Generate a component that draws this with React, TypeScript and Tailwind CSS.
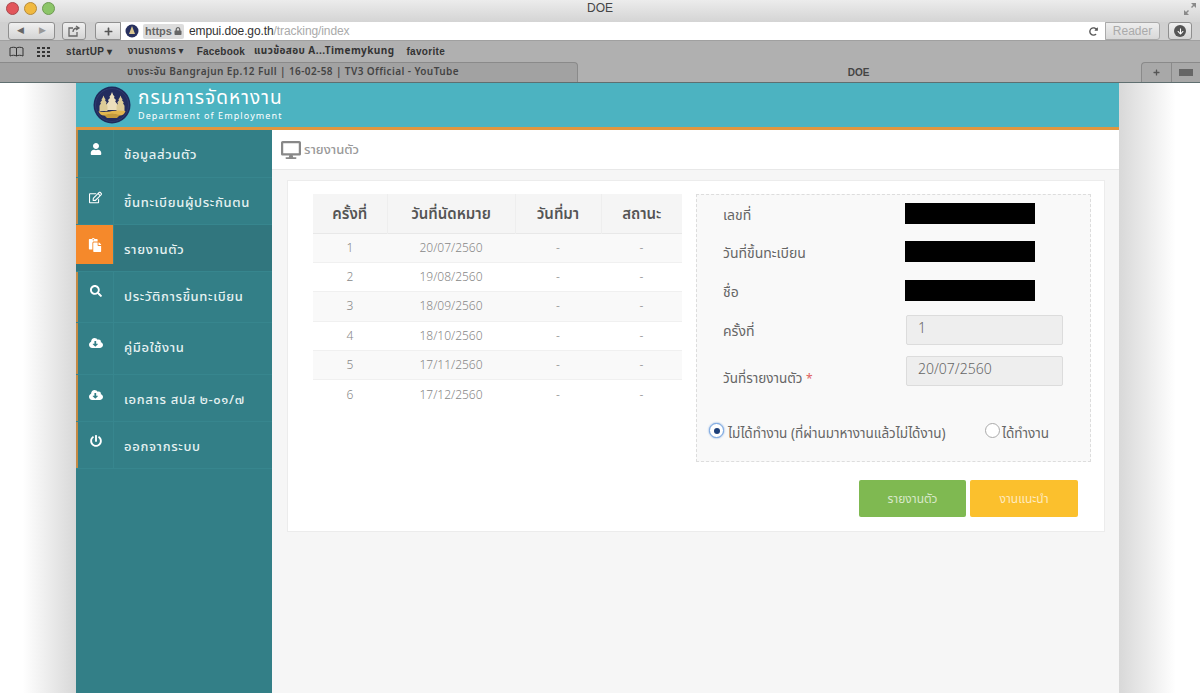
import React from 'react';
import { FaUser, FaRegEdit, FaPaste, FaSearch, FaCloudDownloadAlt, FaPowerOff, FaDesktop, FaLock, FaPlus, FaRedoAlt, FaArrowDown } from 'react-icons/fa';

const thai = { fontFamily: '"Noto Sans Thai", "Noto Sans", "Open Sans", "DejaVu Sans", sans-serif' };

const menu = [
    { label: 'ข้อมูลส่วนตัว', icon: FaUser, h: 'h-[48px]', size: 12 },
    { label: 'ขึ้นทะเบียนผู้ประกันตน', icon: FaRegEdit, h: 'h-[47px]', size: 13 },
    { label: 'รายงานตัว', icon: FaPaste, h: 'h-[47px]', size: 14, active: true },
    { label: 'ประวัติการขึ้นทะเบียน', icon: FaSearch, h: 'h-[51px]', size: 12 },
    { label: 'คู่มือใช้งาน', icon: FaCloudDownloadAlt, h: 'h-[52px]', size: 14 },
    { label: 'เอกสาร สปส ๒-๐๑/๗', icon: FaCloudDownloadAlt, h: 'h-[47px]', size: 14 },
    { label: 'ออกจากระบบ', icon: FaPowerOff, h: 'h-[47px]', size: 12 },
];

const rows = [
    ['1', '20/07/2560'],
    ['2', '19/08/2560'],
    ['3', '18/09/2560'],
    ['4', '18/10/2560'],
    ['5', '17/11/2560'],
    ['6', '17/12/2560'],
];

const Logo = () => (
    <svg width="38" height="38" viewBox="0 0 38 38">
        <circle cx="19" cy="19" r="18.5" fill="#1d2a5c" />
        <circle cx="19" cy="19" r="16.5" fill="#232c5e" stroke="#3d4a80" strokeWidth="0.5" />
        {/* three chedis */}
        <path d="M19 6l1.200 3 1.300 1.500-.5 1.500 2 2-.8 1.500 2 2.500V24H13.800v-6l2-2.500-.8-1.500 2-2-.5-1.500L17.800 9z" fill="#ecdfbd" />
        <path d="M10.500 9.500l1 2.500 1 1.200-.4 1.300 1.600 1.800-.6 1.200 1.400 2.200V25H6.500v-5.300l1.400-2.200-.6-1.200 1.600-1.800-.4-1.300 1-1.200z" fill="#dccb98" />
        <path d="M27.500 9.500l1 2.500 1 1.200-.4 1.300 1.600 1.800-.6 1.200 1.400 2.200V25h-8v-5.300l1.400-2.200-.6-1.200 1.600-1.800-.4-1.300 1-1.200z" fill="#dccb98" />
        <path d="M5.500 25c4 1.500 8 1 13.500 0s9.500-.5 13.500 0c-1 3-3 4.500-5.500 4.500-3 0-5-1.500-8-1.500s-5 1.500-8 1.500c-2.500 0-4.500-1.500-5.500-4.500z" fill="#e2b64f" />
        <path d="M11 29l8-1.500 8 1.500-3 3h-10z" fill="#c49a3c" />
    </svg>
);

const BrowserChrome = () => (
    <div className="shrink-0" style={{ fontFamily: '"Liberation Sans", Arial, sans-serif' }}>
        <div className="h-[22px] bg-gradient-to-b from-[#ececec] to-[#d4d4d4] flex items-start pt-[2px] relative">
            <div className="flex gap-[5px] pl-[6px]">
                <span className="w-[13px] h-[13px] rounded-full bg-[#e2555a] border border-[#a8484c]" />
                <span className="w-[13px] h-[13px] rounded-full bg-[#f0b93f] border border-[#b68a3a]" />
                <span className="w-[13px] h-[13px] rounded-full bg-[#8cc568] border border-[#6e9a52]" />
            </div>
            <span className="absolute left-0 right-0 top-0 text-center text-[12px] leading-[17px] text-[#444]">DOE</span>
            <svg className="ml-auto mr-[3px]" width="14" height="14" viewBox="0 0 14 14" fill="#8a8a8a">
                <path d="M8 1h5v5l-2-2-2 2-1-1 2-2zM1 8l2 2 2-2 1 1-2 2 2 2H1z" />
            </svg>
        </div>
        <div className="h-[18px] bg-[#d0d0d0] flex items-center">
            <div className="ml-[8px] w-[47px] h-[18px] border border-[#8f8f8f] rounded-[3px] bg-gradient-to-b from-[#f0f0f0] to-[#d4d4d4] flex items-center justify-around text-[9px] text-[#666]">
                <span>◀</span>
                <span className="text-[#999]">▶</span>
            </div>
            <div className="ml-[7px] w-[24px] h-[18px] border border-[#8f8f8f] rounded-[3px] bg-gradient-to-b from-[#f0f0f0] to-[#d4d4d4] flex items-center justify-center">
                <svg width="13" height="12" viewBox="0 0 13 12" fill="none" stroke="#666" strokeWidth="1.3">
                    <path d="M9 7v4H1V3h4M5 7c0-3 2-4 5-4M8 1l3 2-3 2" />
                </svg>
            </div>
            <div className="ml-[9px] w-[26px] h-[18px] border border-[#8f8f8f] rounded-l-[3px] bg-gradient-to-b from-[#f0f0f0] to-[#d4d4d4] flex items-center justify-center text-[#555]">
                <FaPlus size={9} />
            </div>
            <div className="w-[984px] h-[18px] bg-white flex items-center pl-[4px]">
                <svg width="14" height="14" viewBox="0 0 14 14">
                    <circle cx="7" cy="7" r="6.5" fill="#27305f" />
                    <path d="M7 2l3 8H4z" fill="#d9c690" />
                </svg>
                <span className="ml-[4px] h-[15px] w-[41px] bg-[#dddddd] rounded-[2px] flex items-center justify-center gap-[2px] text-[11px] text-[#666] font-bold">
                    https<FaLock size={8} />
                </span>
                <span className="ml-[5px] text-[12px] tracking-[-0.1px] text-[#333]">empui.doe.go.th<span className="text-[#aaa]">/tracking/index</span></span>
                <FaRedoAlt className="ml-auto mr-[7px] text-[#555]" size={9} />
            </div>
            <div className="w-[55px] h-[18px] border border-[#aaa] rounded-r-[3px] bg-gradient-to-b from-[#eee] to-[#d8d8d8] flex items-center justify-center text-[12px] text-[#aaa]">Reader</div>
            <div className="ml-[8px] w-[24px] h-[18px] border border-[#8f8f8f] rounded-[3px] bg-gradient-to-b from-[#f0f0f0] to-[#d4d4d4] flex items-center justify-center">
                <span className="w-[12px] h-[12px] rounded-full bg-[#555] flex items-center justify-center text-white"><FaArrowDown size={7} /></span>
            </div>
        </div>
        <div className="h-[22px] bg-[#b0b0b0] flex items-center text-[10px] font-bold text-[#333] tracking-[0.15px] border-t border-[#a0a0a0]">
            <svg className="ml-[9px]" width="15" height="11" viewBox="0 0 15 11" fill="none" stroke="#333">
                <path d="M7.500 2C6 1 3 1 1 2v8c2-1 5-1 6.500 0 1.500-1 4.500-1 6.500 0V2c-2-1-5-1-6.500 0zv8" />
            </svg>
            <svg className="ml-[13px]" width="13" height="10" viewBox="0 0 13 10" fill="#333">
                <path d="M0 0h3v2H0zM5 0h3v2H5zM10 0h3v2h-3zM0 4h3v2H0zM5 4h3v2H5zM10 4h3v2h-3zM0 8h3v2H0zM5 8h3v2H5zM10 8h3v2h-3z" />
            </svg>
            <span className="ml-[16px] tracking-[0.4px]">startUP ▾</span>
            <span className="ml-[15px] text-[10px] font-semibold" style={thai}>งานราชการ ▾</span>
            <span className="ml-[13px] tracking-[0.2px]">Facebook</span>
            <span className="ml-[9px] tracking-[0.4px]" style={thai}>แนวข้อสอบ A...Timemykung</span>
            <span className="ml-[12px] tracking-[0.3px]">favorite</span>
        </div>
        <div className="h-[21px] bg-[#b0b0b0] flex text-[10px] font-bold text-[#444] border-b border-[#5f6f70]">
            <div className="w-[578px] flex items-center pl-[127px] bg-[#a2a2a2] border-t border-r border-[#8a8a8a] rounded-tr-[4px] whitespace-nowrap tracking-[0.4px] font-semibold" style={thai}>
                บางระจัน Bangrajun Ep.12 Full | 16-02-58 | TV3 Official - YouTube
            </div>
            <div className="flex-1 flex items-center justify-center pr-[2px]">DOE</div>
            <div className="w-[30px] flex items-center justify-center bg-[#a8a8a8] border-t border-l border-[#8a8a8a] rounded-tl-[4px] text-[#555]"><FaPlus size={7} /></div>
            <div className="w-[29px] flex items-center justify-center bg-[#a8a8a8] border-t border-l border-[#8a8a8a]">
                <span className="w-[14px] h-[7px] bg-[#666]" />
            </div>
        </div>
    </div>
);

const Sidebar = () => (
    <aside className="w-[196px] bg-[#337f87] shrink-0">
        {menu.map(item => {
            const Icon = item.icon;
            return (
                <div key={item.label} className={`${item.h} flex border-b border-[#37868e] ${item.active ? 'bg-[#31767e]' : ''}`}>
                    <div className={`w-[38px] shrink-0 flex justify-center pt-[13px] text-white border-r border-[#37868e] ${item.active ? 'bg-[#f5892b] h-[39px]' : 'border-l-2 border-l-[#c48a45]'}`}>
                        <Icon size={item.size} />
                    </div>
                    <span className="pl-[10px] pt-[15px] text-[13px] font-medium tracking-[0.65px] text-[#e6f2f2] leading-[20px] whitespace-nowrap" style={thai}>
                        {item.label}
                    </span>
                </div>
            );
        })}
    </aside>
);

const Field = ({ label, mb, start, children }: { label: React.ReactNode; mb: string; start?: boolean; children: React.ReactNode }) => (
    <div className={`flex ${start ? 'items-start' : 'items-center'} ${mb}`}>
        <div className={`w-[208px] h-[20px] pl-[26px] leading-[20px] text-[#666] ${start ? 'pt-[13px] text-[13.500px]' : 'pt-[2px] text-[14px]'}`}>{label}</div>
        {children}
    </div>
);

const Redacted = () => <div className="w-[130px] h-[21px] bg-black" />;

const ReadOnly = ({ value }: { value: string }) => (
    <div className="w-[157px] h-[30px] ml-[1px] bg-[#eeeeee] border border-[#dcdcdc] rounded-[2px] px-[11px] text-[14px] font-light text-[#666] leading-[26px]">{value}</div>
);

const Content = () => (
    <main className="flex-1 bg-[#f6f6f6] min-w-0" style={thai}>
        <div className="h-[40px] bg-white border-b border-[#e8e8e8] flex items-center pl-[9px] text-[#999]">
            <FaDesktop size={20} className="text-[#888]" />
            <span className="ml-[3px] mt-[2px] text-[13px] font-medium">รายงานตัว</span>
        </div>
        <div className="ml-[15px] mr-[14px] mt-[10px] h-[352px] bg-white border border-[#ececec] pl-[25px] pr-[13px] pt-[13px]">
            <div className="flex gap-[14px]">
                <table className="w-[369px] h-fit table-fixed border-collapse">
                    <thead>
                        <tr className="h-[39px] bg-[#f5f5f5] border-b border-[#e8e8e8] text-[15px] text-[#555]">
                            <th className="w-[74px] pt-[3px] font-semibold">ครั้งที่</th>
                            <th className="w-[128px] pt-[3px] font-semibold border-x border-[#eeeeee]">วันที่นัดหมาย</th>
                            <th className="w-[86px] pt-[3px] font-semibold border-r border-[#eeeeee]">วันที่มา</th>
                            <th className="pt-[3px] font-semibold">สถานะ</th>
                        </tr>
                    </thead>
                    <tbody>
                        {rows.map((r, i) => (
                            <tr key={r[0]} className={`h-[29.4px] text-[12px] font-light text-center text-[#888] border-b border-[#f0f0f0] last:border-b-0 ${i % 2 === 0 ? 'bg-[#f9f9f9]' : 'bg-white'}`}>
                                <td>{r[0]}</td>
                                <td>{r[1]}</td>
                                <td>-</td>
                                <td>-</td>
                            </tr>
                        ))}
                    </tbody>
                </table>
                <div className="w-[395px] h-[268px] bg-[#f9f9f9] border border-dashed border-[#dddddd] pt-[8px]">
                    <Field label="เลขที่" mb="mb-[17px]"><Redacted /></Field>
                    <Field label="วันที่ขึ้นทะเบียน" mb="mb-[18px]"><Redacted /></Field>
                    <Field label="ชื่อ" mb="mb-[14px]"><Redacted /></Field>
                    <Field label="ครั้งที่" mb="mb-[11px]"><ReadOnly value="1" /></Field>
                    <Field start label={<span>วันที่รายงานตัว <span className="text-[12px] text-[#e06060]">*</span></span>} mb="mb-[38px]"><ReadOnly value="20/07/2560" /></Field>
                    <div className="flex text-[13.500px] text-[#666] leading-[20px]">
                        <div className="flex items-start w-[288px] pl-[12px]">
                            <span className="mt-[-1px] w-[15px] h-[15px] rounded-full bg-white border border-[#7aa7e0] flex items-center justify-center shadow-[0_0_2px_#5a90d8]">
                                <span className="w-[6px] h-[6px] rounded-full bg-[#1c3f7a]" />
                            </span>
                            <span className="ml-[4px] whitespace-nowrap">ไม่ได้ทำงาน (ที่ผ่านมาหางานแล้วไม่ได้งาน)</span>
                        </div>
                        <div className="flex items-start">
                            <span className="mt-[-1px] w-[15px] h-[15px] rounded-full bg-white border border-[#aaaaaa]" />
                            <span className="ml-[2px]">ได้ทำงาน</span>
                        </div>
                    </div>
                </div>
            </div>
            <div className="flex justify-end gap-[4px] mt-[18px] pr-[13px] text-[12px] text-white/70">
                <button className="w-[107px] h-[37px] bg-[#7fb951] rounded-[2px]">รายงานตัว</button>
                <button className="w-[108px] h-[37px] bg-[#fbc02d] rounded-[2px]">งานแนะนำ</button>
            </div>
        </div>
    </main>
);

const App: React.FC = () => (
    <div className="w-[1200px] h-[693px] overflow-hidden flex flex-col bg-white">
        <BrowserChrome />
        <div className="flex flex-1 min-h-0">
            <div className="w-[76px] shrink-0 bg-gradient-to-r from-white from-30% to-[#d8d8d8]" />
            <div className="w-[1043px] shrink-0 flex flex-col">
                <header className="h-[47px] shrink-0 bg-[#4cb3c1] border-b-[3px] border-[#e0963f] flex items-center pl-[17px]">
                    <Logo />
                    <div className="ml-[7px] text-white" style={thai}>
                        <div className="text-[19px] leading-[22px] tracking-[1.050px]">กรมการจัดหางาน</div>
                        <div className="text-[9px] leading-[12px] tracking-[1.100px]">Department of Employment</div>
                    </div>
                </header>
                <div className="flex flex-1 min-h-0">
                    <div className="bg-[#337f87] flex">
                        <Sidebar />
                    </div>
                    <Content />
                </div>
            </div>
            <div className="flex-1 bg-gradient-to-r from-[#d8d8d8] to-white to-70%" />
        </div>
    </div>
);

export default App;
